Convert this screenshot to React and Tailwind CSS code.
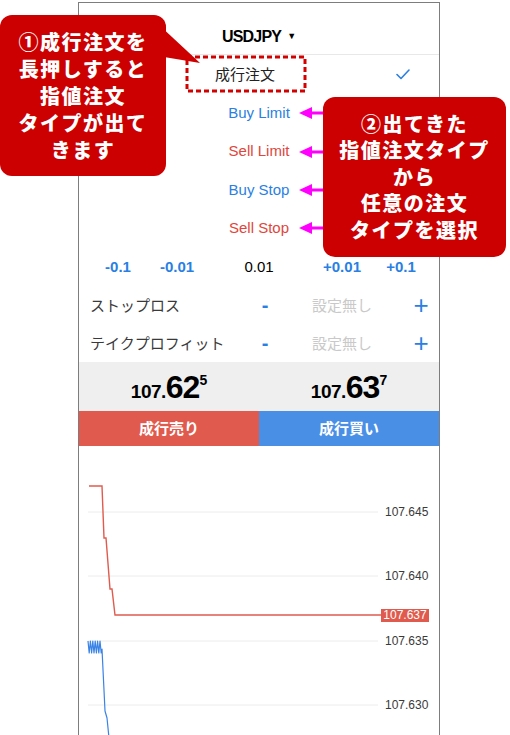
import React from "react";

const ui = { fontFamily: '"Liberation Sans", "Noto Sans CJK JP", sans-serif' };
const jp = { fontFamily: '"Noto Sans CJK JP", "Liberation Sans", sans-serif' };

const orderTypes = [
  { label: "Buy Limit", color: "text-[#2a7fe3]" },
  { label: "Sell Limit", color: "text-[#e0463c]" },
  { label: "Buy Stop", color: "text-[#2a7fe3]" },
  { label: "Sell Stop", color: "text-[#e0463c]" },
];

const gridLines = [
  { y: 66, label: "107.645" },
  { y: 130, label: "107.640" },
  { y: 195, label: "107.635" },
  { y: 259, label: "107.630" },
];

function zigzag() {
  const pts = [];
  let up = true;
  for (let x = 9; x <= 23; x += 1.2) {
    pts.push(`${x.toFixed(1)},${up ? 195 : 207}`);
    up = !up;
  }
  pts.push("23,203", "26,265", "28,272", "30,292");
  return pts.join(" ");
}

function StepperRow({ label }) {
  return (
    <div className="flex h-[38px] items-center text-[15px]">
      <span className="w-[160px] pl-[11px] text-[#3a3a3a]" style={jp}>{label}</span>
      <span className="w-[52px] text-center text-[20px] font-bold leading-none text-[#2a7fe3]">-</span>
      <span className="w-[102px] text-center text-[#c9c9c9]" style={jp}>設定無し</span>
      <span className="flex-1 pl-[10px] text-center text-[26px] font-light leading-none text-[#2a7fe3]">+</span>
    </div>
  );
}

function Price({ big, pips, small }) {
  return (
    <div className="flex flex-1 items-baseline justify-center text-black" style={{ fontFamily: '"Liberation Sans", Roboto, sans-serif' }}>
      <span className="text-[19px] font-bold tracking-[-0.5px]">{big}</span>
      <span className="text-[32px] font-bold leading-none tracking-[-1px]">{pips}</span>
      <span className="relative -top-[13px] text-[14px] font-bold">{small}</span>
    </div>
  );
}

export default function App() {
  return (
    <div className="relative h-[735px] w-[510px] overflow-hidden bg-white" style={ui}>
      <div className="ml-[78px] mt-[2px] flex h-[733px] w-[362px] flex-col border border-b-0 border-[#7d7d7d]">
        <header className="flex h-[52px] items-center justify-center border-b border-[#e8e8e8] pt-[16px]">
          <span className="text-[16px] font-bold tracking-[-0.8px] text-black">USDJPY</span>
          <span className="ml-[6px] text-[9px] text-black">▼</span>
        </header>

        <div className="flex h-[38.6px] items-center">
          <span className="w-[317px] pl-[15px] text-center text-[15px] text-[#222]" style={jp}>成行注文</span>
          <svg width="14" height="11" viewBox="0 0 14 11" fill="none">
            <path d="M1 5.5 L5 9.5 L13 1" stroke="#2a7fe3" strokeWidth="1.6" strokeLinecap="round" strokeLinejoin="round" />
          </svg>
        </div>
        {orderTypes.map((o) => (
          <div key={o.label} className={`flex h-[38.6px] items-center justify-center text-[15px] ${o.color}`}>
            {o.label}
          </div>
        ))}

        <div className="flex h-[38px] items-center text-[15px]">
          <span className="w-[78px] text-center font-semibold text-[#2a7fe3]">-0.1</span>
          <span className="w-[40px] text-center font-semibold text-[#2a7fe3]">-0.01</span>
          <span className="w-[124px] text-center text-black">0.01</span>
          <span className="w-[42px] text-center font-semibold text-[#2a7fe3]">+0.01</span>
          <span className="flex-1 text-center font-semibold text-[#2a7fe3]">+0.1</span>
        </div>

        <StepperRow label="ストップロス" />
        <StepperRow label="テイクプロフィット" />

        <div className="flex h-[49px] items-center bg-[#efefef] pt-[4px]">
          <Price big="107." pips="62" small="5" />
          <Price big="107." pips="63" small="7" />
        </div>

        <div className="flex h-[35px] text-[15px] font-bold text-white" style={jp}>
          <button className="flex-1 bg-[#e05b4d]">成行売り</button>
          <button className="flex-1 bg-[#4a8fe6]">成行買い</button>
        </div>

        <div className="relative flex-1 overflow-hidden bg-white">
          <svg className="absolute inset-0" width="360" height="290" viewBox="0 0 360 290" fill="none">
            {gridLines.map((g) => (
              <line key={g.y} x1="9" x2="299" y1={g.y} y2={g.y} stroke="#ececec" strokeWidth="1" />
            ))}
            <polyline
              points="10,40 23,40 25,92 27,92 31,143 33,143 36,169 302,169"
              stroke="#e05b4d"
              strokeWidth="1.4"
            />
            <polyline points={zigzag()} stroke="#3a83e6" strokeWidth="1.2" strokeLinejoin="round" />
          </svg>
          {gridLines.map((g) => (
            <span key={g.label} className="absolute left-[306px] text-[12px] leading-[14px] text-[#3a3a3a]" style={{ top: g.y - 7 }}>
              {g.label}
            </span>
          ))}
          <span className="absolute left-[302px] top-[163px] w-[48px] bg-[#e05b4d] text-center text-[12px] leading-[13px] text-white">
            107.637
          </span>
        </div>
      </div>

      {/* annotation: left callout */}
      <svg className="absolute left-[150px] top-[20px]" width="55" height="50" viewBox="0 0 55 50">
        <polygon points="8,4 50,43 8,36" fill="#cc0000" />
      </svg>
      <div
        className="absolute left-0 top-[15px] flex h-[161px] w-[166px] flex-col items-center justify-center rounded-[12px] bg-[#cc0000] text-[20px] font-black leading-[27px] tracking-[1.5px] text-white"
        style={jp}
      >
        <span>①成行注文を</span>
        <span>長押しすると</span>
        <span>指値注文</span>
        <span>タイプが出て</span>
        <span>きます</span>
      </div>

      {/* dashed frame */}
      <svg className="absolute left-[185px] top-[55px]" width="122" height="38" viewBox="0 0 122 38" fill="none">
        <rect x="2" y="2" width="118" height="34" stroke="#d40000" strokeWidth="3" strokeDasharray="5 3" />
      </svg>

      {/* arrows */}
      <svg className="absolute left-[294px] top-[100px]" width="44" height="140" viewBox="0 0 44 140" fill="none">
        {[13, 52, 90, 128].map((y) => (
          <g key={y}>
            <line x1="15" x2="38" y1={y} y2={y} stroke="#fff" strokeWidth="7" strokeLinecap="round" />
            <polygon points={`5,${y} 18,${y - 7} 18,${y + 7}`} fill="#fff" stroke="#fff" strokeWidth="3" strokeLinejoin="round" />
            <line x1="15" x2="38" y1={y} y2={y} stroke="#ff00ff" strokeWidth="3" strokeLinecap="round" />
            <polygon points={`5,${y} 18,${y - 6} 18,${y + 6}`} fill="#ff00ff" />
          </g>
        ))}
      </svg>

      {/* annotation: right callout */}
      <div
        className="absolute left-[323px] top-[97px] flex h-[160px] w-[183px] flex-col items-center justify-center rounded-[12px] bg-[#cc0000] text-[20px] font-black leading-[26.5px] tracking-[1.5px] text-white"
        style={jp}
      >
        <span>②出てきた</span>
        <span>指値注文タイプ</span>
        <span>から</span>
        <span>任意の注文</span>
        <span>タイプを選択</span>
      </div>
    </div>
  );
}
